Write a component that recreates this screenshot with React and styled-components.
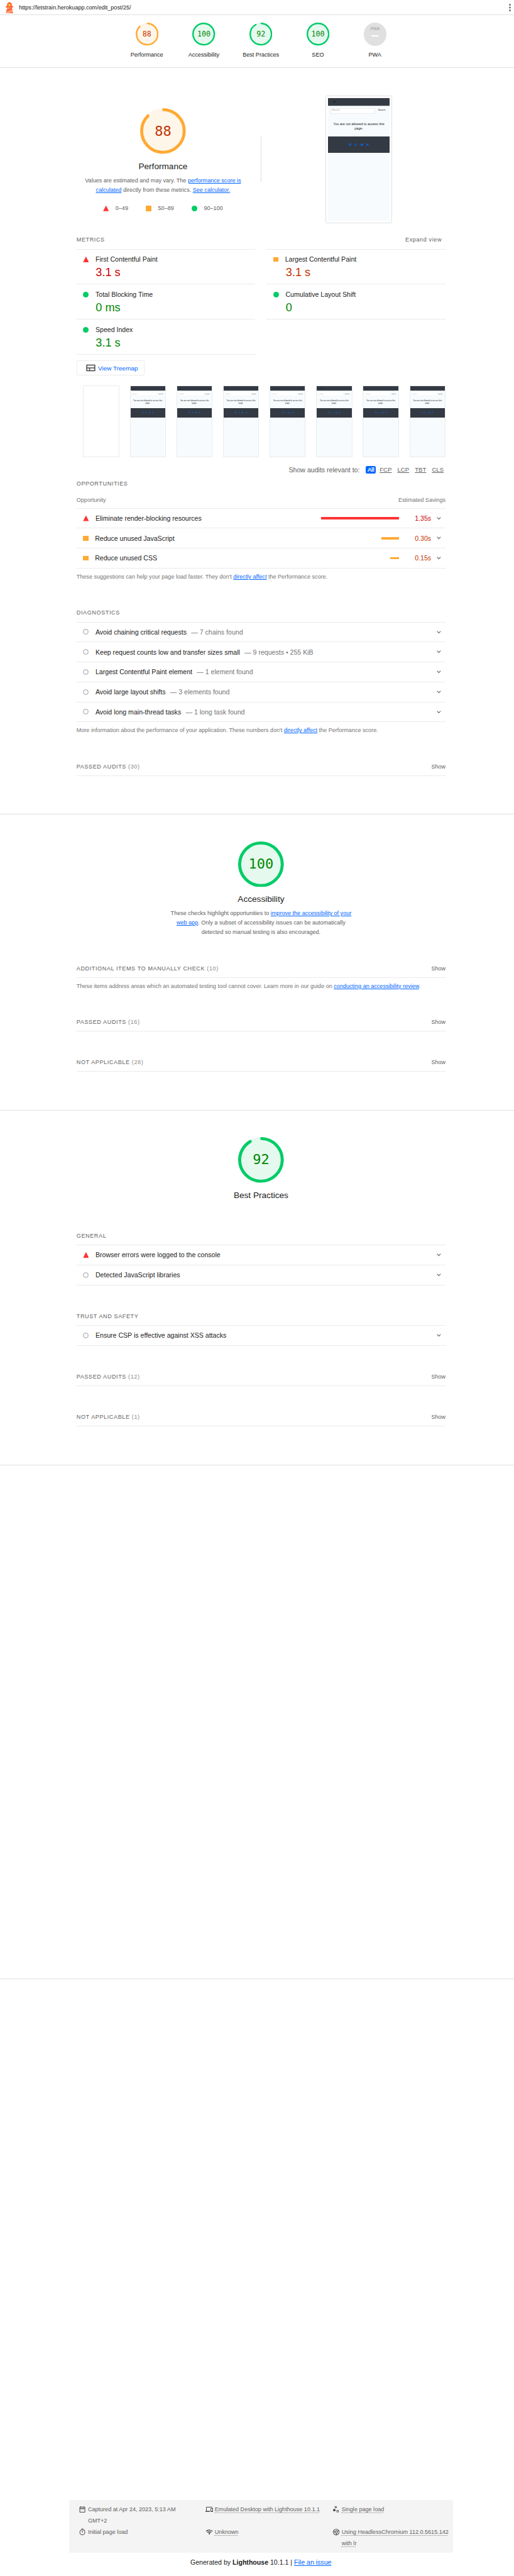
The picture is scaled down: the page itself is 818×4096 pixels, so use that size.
import React from "react";
import styled, { createGlobalStyle, css } from "styled-components";

/* 1rem equals ten layout units of the report */
const GlobalStyle = createGlobalStyle`
  html { font-size: 7.563px; }
  *, *::before, *::after { box-sizing: border-box; }
  body {
    margin: 0;
    background: #fff;
    color: #212121;
    font-family: "Liberation Sans", Arial, sans-serif;
    font-size: 1.4rem;
  }
`;

const tones = {
  pass: { fill: "#00cc66", text: "#008800", soft: "#e5f9ef" },
  average: { fill: "#ffaa33", text: "#c33300", soft: "#fff6ea" },
  fail: { fill: "#ff3333", text: "#cc0000", soft: "#ffeaea" },
};

const Page = styled.div`
  height: 4096px;
  overflow: hidden;
`;

const Topbar = styled.header`
  height: 3.2rem;
  display: flex;
  align-items: center;
  padding: 0 0.6rem 0 0.8rem;
  border-bottom: 1px solid #e0e0e0;
  font-size: 1.2rem;
`;

const Logo = styled.svg`
  width: 2.4rem;
  height: 2.4rem;
  margin-right: 0.8rem;
`;

const MenuDots = styled.svg`
  width: 0.4rem;
  height: 1.6rem;
  margin-left: auto;
  fill: #757575;
`;

const ScoreHeader = styled.nav`
  height: 11.1rem;
  padding: 1.6rem 0 0 24.9rem;
  display: flex;
  border-bottom: 1px solid #e0e0e0;
`;

const ScoreItem = styled.a`
  width: 12rem;
  display: flex;
  flex-direction: column;
  align-items: center;
  gap: 1rem;
  font-size: 1.2rem;
  line-height: 2rem;
  color: #212121;
`;

const GaugeBox = styled.div`
  display: grid;
  width: ${(p) => (p.$large ? "9.6rem" : "4.8rem")};
  height: ${(p) => (p.$large ? "9.6rem" : "4.8rem")};
  place-items: center;
  > * { grid-area: 1 / 1; }
  svg { width: 100%; height: 100%; }
`;

const GaugeValue = styled.span`
  font-family: "DejaVu Sans Mono", monospace;
  font-size: ${(p) => (p.$large ? "2.9rem" : "1.54rem")};
  line-height: 1;
  color: ${(p) => tones[p.$tone].text};
`;

const PwaBadge = styled.div`
  width: 4.8rem;
  height: 4.8rem;
  border-radius: 50%;
  background: #e0e0e0;
  color: #b4b4b4;
  display: flex;
  flex-direction: column;
  align-items: center;
  padding-top: 0.85rem;
  font: italic bold 0.95rem/0.9rem "Liberation Sans", sans-serif;
  letter-spacing: -0.06rem;
`;

const PwaDash = styled.i`
  width: 1.6rem;
  height: 0.35rem;
  margin-top: 0.8rem;
  background: #fff;
`;

const Section = styled.section`
  padding: ${(p) => p.$top || "5.6rem"} 14.4rem 8rem 16.1rem;
  border-bottom: 1px solid #e0e0e0;
`;

const EmptySection = styled.section`
  height: ${(p) => p.$height};
  border-bottom: ${(p) => (p.$last ? "none" : "1px solid #e0e0e0")};
`;

const Hero = styled.div`
  display: grid;
  grid-template-columns: 36.4rem 4.8rem 36.4rem;
  justify-items: center;
  height: 28.6rem;
`;

const Divider = styled.div`
  width: 1px;
  height: 9.6rem;
  margin-top: 8.6rem;
  background: #e0e0e0;
`;

const CategoryIntro = styled.div`
  display: flex;
  flex-direction: column;
  align-items: center;
  text-align: center;
  padding-top: ${(p) => p.$offset || 0};
`;

const CategoryTitle = styled.h2`
  margin: 1.2rem 0 0;
  font-size: 1.8rem;
  font-weight: 400;
  line-height: 2.8rem;
`;

const CategoryText = styled.div`
  margin: 0.6rem 0 0;
  font-size: 1.2rem;
  line-height: 2rem;
  white-space: nowrap;
  color: #616161;
`;

const Link = styled.a`
  color: #0066ff;
  text-decoration: underline;
`;

const Legend = styled.div`
  display: flex;
  gap: 3.7rem;
  margin-top: 1.8rem;
  font-size: 1.2rem;
  line-height: 2rem;
  color: #616161;
`;

const LegendItem = styled.span`
  display: flex;
  align-items: center;
  gap: 1.4rem;
`;

const Mark = styled.i`
  flex: none;
  width: 1.2rem;
  height: 1.2rem;
  ${(p) => p.$kind === "fail" && css`
    background: #ff3333;
    clip-path: polygon(50% 0, 100% 100%, 0 100%);
  `}
  ${(p) => p.$kind === "average" && css`
    background: #ffaa33;
    width: ${p.$small ? "1.1rem" : "1.2rem"};
    height: ${p.$small ? "1rem" : "1.2rem"};
  `}
  ${(p) => p.$kind === "pass" && css`
    background: #00cc66;
    border-radius: 50%;
  `}
  ${(p) => p.$kind === "info" && css`
    box-shadow: inset 0 0 0 0.2rem #bdbdbd;
    border-radius: 50%;
  `}
`;

const ScreenFrame = styled.div`
  width: 14rem;
  height: 26.8rem;
  padding: calc(0.5rem - 1px);
  border: 1px solid #e0e0e0;
  border-radius: 0.3rem;
`;

/* --u is one unit of the 130 x 258 captured page */
const Screen = styled.div`
  --u: ${(p) => p.$unit};
  height: 100%;
  background: #f7fbfd;
  text-align: center;
  overflow: hidden;
`;

const ScreenNav = styled.div`
  height: calc(var(--u) * 16.5);
  padding: calc(var(--u) * 6) calc(var(--u) * 11);
  background: #343a43;
  box-shadow: 0 calc(var(--u) * 0.8) 0 #b6bac4;
  svg { display: block; width: calc(var(--u) * 6); height: calc(var(--u) * 5); }
`;

const ScreenSearch = styled.div`
  display: flex;
  align-items: center;
  justify-content: space-between;
  padding: calc(var(--u) * 4.5) calc(var(--u) * 9) 0 calc(var(--u) * 5);
  font-size: calc(var(--u) * 5);
  line-height: 1;
`;

const ScreenInput = styled.span`
  width: calc(var(--u) * 94);
  height: calc(var(--u) * 12.5);
  padding: calc(var(--u) * 3.6) calc(var(--u) * 4);
  text-align: left;
  color: #999;
  background: #fff;
  box-shadow: inset 0 0 0 calc(var(--u) * 0.8) ${(p) => (p.$faint ? "#f0f2f4" : "#d5d9de")};
  border-radius: calc(var(--u) * 1.5);
`;

const ScreenMessage = styled.div`
  height: calc(var(--u) * 47.5);
  padding-top: calc(var(--u) * 17);
  font-size: calc(var(--u) * 7.15);
  line-height: calc(var(--u) * 9.1);
`;

const ScreenFooter = styled.div`
  height: calc(var(--u) * 35);
  display: flex;
  justify-content: center;
  align-items: center;
  gap: calc(var(--u) * 7.4);
  background: #343a43;
  svg { width: calc(var(--u) * 5.2); height: calc(var(--u) * 5.2); fill: #0a66e8; }
`;

const MetricsHeader = styled.div`
  display: flex;
  justify-content: space-between;
  height: 3.6rem;
  padding-right: 0.8rem;
  line-height: 3.5rem;
  font-size: 1.2rem;
  letter-spacing: 0.08rem;
  color: #616161;
`;

const MetricsGrid = styled.div`
  display: grid;
  grid-template-columns: 37.6rem 37.6rem;
  column-gap: 2.4rem;
  align-items: start;
  height: 22.2rem;
`;

const MetricColumn = styled.div`
  border-bottom: 1px solid #ebebeb;
`;

const Metric = styled.div`
  height: 7.4rem;
  &:last-child { height: 7.3rem; }
  padding: 1.1rem 0 0 1.4rem;
  border-top: 1px solid #ebebeb;
`;

const MetricName = styled.div`
  display: flex;
  align-items: center;
  line-height: 2rem;
  i { margin-right: 1.4rem; }
  i + span { flex: none; }
`;

const MetricValue = styled.div`
  margin-left: 2.65rem;
  font-size: 2.4rem;
  line-height: 3.6rem;
  color: ${(p) => tones[p.$tone].text};
`;

const TreemapButton = styled.button`
  display: flex;
  align-items: center;
  gap: 0.4rem;
  width: 14.3rem;
  height: 3.2rem;
  margin: 1.3rem 0 2.1rem;
  padding: 0 0 0 1.6rem;
  border: 1px solid #ebebeb;
  border-radius: 0.3rem;
  background: #fff;
  color: #0066ff;
  font: 1.32rem "Liberation Sans", sans-serif;
  white-space: nowrap;
  svg { width: 2.4rem; height: 2.4rem; fill: #4a4a4a; }
`;

const Filmstrip = styled.div`
  display: flex;
  justify-content: space-between;
  padding-left: 1.4rem;
`;

const Frame = styled.div`
  width: 7.6rem;
  height: 15rem;
  border: 1px solid #ebebeb;
`;

const Filter = styled.div`
  display: flex;
  justify-content: flex-end;
  align-items: center;
  height: 2.4rem;
  margin: 1.5rem 0 0.8rem;
  padding-right: 0.4rem;
  color: #616161;
`;

const FilterOption = styled.span`
  margin-left: ${(p) => (p.$active ? "1.3rem" : "1.2rem")};
  font-size: 1.27rem;
  line-height: 1.6rem;
  text-decoration: underline;
  ${(p) => p.$active && css`
    padding: 0 0.35rem;
    margin-right: -0.4rem;
    border-radius: 0.3rem;
    background: #0066ff;
    color: #fff;
    text-decoration: none;
    text-shadow: 0 0 0.5px #fff;
  `}
`;

const GroupTitle = styled.h3`
  margin: ${(p) => p.$top || "5.6rem"} 0 0;
  height: 2.8rem;
  font-size: 1.2rem;
  font-weight: 400;
  line-height: 2rem;
  letter-spacing: 0.08rem;
  text-transform: uppercase;
  color: #616161;
`;

const TableHead = styled.div`
  display: flex;
  justify-content: space-between;
  height: 3.2rem;
  padding-top: 0.6rem;
  font-size: 1.2rem;
  line-height: 2rem;
  color: #757575;
`;

const AuditList = styled.div`
  border-bottom: 1px solid #ebebeb;
`;

const Audit = styled.div`
  display: flex;
  align-items: center;
  height: 4.2rem;
  padding: 0 0.95rem 0 1.4rem;
  border-top: 1px solid #ebebeb;
  > i { margin-right: 1.4rem; }
`;

const Detail = styled.span`
  margin-left: 0.95rem;
  color: #757575;
`;

const Spacer = styled.span`
  flex: 1;
`;

const Bar = styled.span`
  height: 0.5rem;
  background: ${(p) => tones[p.$tone].fill};
`;

const Savings = styled.span`
  width: 6.8rem;
  margin-right: 1.2rem;
  text-align: right;
  color: ${(p) => tones[p.$tone].text};
`;

const ChevronIcon = styled.svg`
  width: 0.9rem;
  height: 0.6rem;
  fill: none;
  stroke: #757575;
  stroke-width: 1.7;
`;

const Note = styled.p`
  margin: 0.8rem 0 0;
  font-size: 1.2rem;
  line-height: 2rem;
  white-space: nowrap;
  color: #757575;
`;

const ClumpHead = styled.div`
  display: flex;
  height: 2.9rem;
  margin-top: 5.6rem;
  border-bottom: 1px solid #ebebeb;
  font-size: 1.2rem;
  line-height: 2rem;
  color: #616161;
`;

const ClumpTitle = styled.span`
  letter-spacing: 0.08rem;
  text-transform: uppercase;
  em { font-style: normal; color: #8a8a8a; }
`;

const ShowLabel = styled.span`
  margin-left: auto;
`;

const MetaBox = styled.footer`
  display: grid;
  grid-template-columns: 26.7rem 26.7rem 1fr;
  grid-template-rows: 4.8rem 4.8rem;
  width: 80.8rem;
  height: 11.2rem;
  margin-left: 14.5rem;
  padding: 0.8rem 0.6rem 0 2rem;
  border-radius: 0.3rem;
  background: #f4f4f4;
  font-size: 1.2rem;
  line-height: 2.4rem;
  color: #616161;
`;

const MetaItem = styled.div`
  display: flex;
  gap: 0.4rem;
  svg { flex: none; width: 1.6rem; height: 1.6rem; margin-top: 0.45rem; fill: #4a4a4a; }
  span {
    ${(p) => !p.$plain && css`
      text-decoration: underline dotted #888;
      text-underline-offset: 0.25rem;
    `}
  }
`;

const Generated = styled.div`
  margin: 1rem 0 0 14.5rem;
  width: 80.8rem;
  text-align: center;
  line-height: 2rem;
`;

const CIRC = 2 * Math.PI * 56;

function Gauge({ score, tone, large }) {
  const dash = score === 100 ? CIRC : (score / 100) * CIRC - 4;
  return (
    <GaugeBox $large={large}>
      <svg viewBox="0 0 120 120">
        <circle cx="60" cy="60" r="60" fill={tones[tone].soft} />
        <circle cx="60" cy="60" r="56" fill="none" stroke={tones[tone].fill} strokeWidth="8"
          strokeLinecap="round" strokeDasharray={`${dash} ${CIRC}`} transform="rotate(-87.95 60 60)" />
      </svg>
      <GaugeValue $large={large} $tone={tone}>{score}</GaugeValue>
    </GaugeBox>
  );
}

function Chevron() {
  return <ChevronIcon viewBox="0 0 9 6"><path d="M0.7 0.8 4.5 4.6 8.3 0.8" /></ChevronIcon>;
}

function PageShot({ unit, faint }) {
  return (
    <Screen $unit={unit}>
      <ScreenNav>
        <svg viewBox="0 0 6 5"><path d="M0.5 0.7h5M0.5 2.5h5M0.5 4.3h5" stroke="#20252b" strokeWidth="1" /></svg>
      </ScreenNav>
      <ScreenSearch><ScreenInput $faint={faint}>Search</ScreenInput><span>Search</span></ScreenSearch>
      <ScreenMessage>
        <div>You are not allowed to access this</div>
        <div>page.</div>
      </ScreenMessage>
      <ScreenFooter>
        <svg viewBox="0 0 16 16"><path d="M16 8a8 8 0 1 0-9.2 7.9v-5.6h-2V8h2V6.200c0-2 1.200-3.100 3-3.100l1.800.2v2h-1c-1 0-1.300.6-1.300 1.200V8h2.200l-.4 2.300H9.300v5.600A8 8 0 0 0 16 8z" /></svg>
        <svg viewBox="0 0 16 16"><path fillRule="evenodd" d="M4 0h8a4 4 0 0 1 4 4v8a4 4 0 0 1-4 4H4a4 4 0 0 1-4-4V4a4 4 0 0 1 4-4zm0 1.500A2.500 2.500 0 0 0 1.500 4v8A2.500 2.500 0 0 0 4 14.500h8a2.500 2.500 0 0 0 2.500-2.500V4A2.500 2.500 0 0 0 12 1.500zM8 4a4 4 0 1 1 0 8 4 4 0 0 1 0-8zm0 1.500a2.500 2.500 0 1 0 0 5 2.500 2.500 0 0 0 0-5z" /></svg>
        <svg viewBox="0 0 16 16"><path fillRule="evenodd" d="M3 2h10a3 3 0 0 1 3 3v6a3 3 0 0 1-3 3H3a3 3 0 0 1-3-3V5a3 3 0 0 1 3-3zm3.500 3.500v5L11 8z" /></svg>
        <svg viewBox="0 0 24 24"><path d="M24 4.600a10 10 0 0 1-2.800.8 5 5 0 0 0 2.100-2.700 10 10 0 0 1-3.100 1.200 4.900 4.900 0 0 0-8.400 4.500A14 14 0 0 1 1.700 3.200a4.900 4.900 0 0 0 1.500 6.500 5 5 0 0 1-2.200-.6 4.900 4.900 0 0 0 3.900 4.900 5 5 0 0 1-2.200.1 4.900 4.900 0 0 0 4.600 3.400A10 10 0 0 1 0 19.500 14 14 0 0 0 21.500 7 10 10 0 0 0 24 4.600z" /></svg>
      </ScreenFooter>
    </Screen>
  );
}

function MetricCard({ name, value, tone }) {
  return (
    <Metric>
      <MetricName><Mark $kind={tone} $small /><span>{name}</span></MetricName>
      <MetricValue $tone={tone}>{value}</MetricValue>
    </Metric>
  );
}

function AuditRow({ kind = "info", title, detail, saving, bar }) {
  return (
    <Audit>
      <Mark $kind={kind} $small />
      <span>{title}</span>
      {detail && <Detail>— {detail}</Detail>}
      <Spacer />
      {saving && <Bar $tone={kind} style={{ width: `${bar}rem` }} />}
      {saving && <Savings $tone={kind}>{saving}</Savings>}
      <Chevron />
    </Audit>
  );
}

function Clump({ title, count }) {
  return (
    <ClumpHead>
      <ClumpTitle>{title} <em>({count})</em></ClumpTitle>
      <ShowLabel>Show</ShowLabel>
    </ClumpHead>
  );
}

const scores = [
  ["Performance", 88, "average"],
  ["Accessibility", 100, "pass"],
  ["Best Practices", 92, "pass"],
  ["SEO", 100, "pass"],
];

export default function App() {
  return (
    <Page>
      <GlobalStyle />
      <Topbar>
        <Logo viewBox="0 0 48 48">
          <path d="m14 7 10-7 10 7v10h5v7h-5l5 24H9l5-24H9v-7h5V7Z" fill="#F63" />
          <path d="M31.561 24H14l-1.689 8.105L31.561 24ZM18.983 48H9l1.022-4.907L35.723 32.27l1.663 7.98L18.983 48Z" fill="#FFA385" />
          <path d="M20.500 10h7v7h-7z" fill="#FF3" />
        </Logo>
        <span>https://letstrain.herokuapp.com/edit_post/25/</span>
        <MenuDots viewBox="0 0 4 16"><circle cx="2" cy="2" r="2" /><circle cx="2" cy="8" r="2" /><circle cx="2" cy="14" r="2" /></MenuDots>
      </Topbar>

      <ScoreHeader>
        {scores.map(([name, score, tone]) => (
          <ScoreItem key={name}><Gauge score={score} tone={tone} />{name}</ScoreItem>
        ))}
        <ScoreItem><PwaBadge>PWA<PwaDash /></PwaBadge>PWA</ScoreItem>
      </ScoreHeader>

      <Section $top="5.8rem">
        <Hero>
          <CategoryIntro $offset="2.7rem">
            <Gauge score={88} tone="average" large />
            <CategoryTitle>Performance</CategoryTitle>
            <CategoryText>
              <div>Values are estimated and may vary. The <Link>performance score is</Link></div>
              <div><Link>calculated</Link> directly from these metrics. <Link>See calculator.</Link></div>
            </CategoryText>
            <Legend>
              <LegendItem><Mark $kind="fail" />0–49</LegendItem>
              <LegendItem><Mark $kind="average" />50–89</LegendItem>
              <LegendItem><Mark $kind="pass" />90–100</LegendItem>
            </Legend>
          </CategoryIntro>
          <Divider />
          <ScreenFrame><PageShot unit="0.1rem" /></ScreenFrame>
        </Hero>

        <MetricsHeader><span>METRICS</span><span>Expand view</span></MetricsHeader>
        <MetricsGrid>
          <MetricColumn>
            <MetricCard name="First Contentful Paint" value="3.1 s" tone="fail" />
            <MetricCard name="Total Blocking Time" value="0 ms" tone="pass" />
            <MetricCard name="Speed Index" value="3.1 s" tone="pass" />
          </MetricColumn>
          <MetricColumn>
            <MetricCard name="Largest Contentful Paint" value="3.1 s" tone="average" />
            <MetricCard name="Cumulative Layout Shift" value="0" tone="pass" />
          </MetricColumn>
        </MetricsGrid>

        <TreemapButton>
          <svg viewBox="0 0 24 24"><path fillRule="evenodd" d="M3 5v14h19V5H3zm2 2h15v4H5V7zm0 10v-4h4v4H5zm6 0v-4h9v4h-9z" /></svg>
          View Treemap
        </TreemapButton>

        <Filmstrip>
          <Frame />
          {[1, 2, 3, 4, 5, 6, 7].map((n) => (
            <Frame key={n}><PageShot unit="0.0565rem" faint /></Frame>
          ))}
        </Filmstrip>

        <Filter>
          Show audits relevant to:
          <FilterOption $active>All</FilterOption>
          <FilterOption>FCP</FilterOption>
          <FilterOption>LCP</FilterOption>
          <FilterOption>TBT</FilterOption>
          <FilterOption>CLS</FilterOption>
        </Filter>

        <GroupTitle $top="0">Opportunities</GroupTitle>
        <TableHead><span>Opportunity</span><span>Estimated Savings</span></TableHead>
        <AuditList>
          <AuditRow kind="fail" title="Eliminate render-blocking resources" saving="1.35s" bar={16.3} />
          <AuditRow kind="average" title="Reduce unused JavaScript" saving="0.30s" bar={3.7} />
          <AuditRow kind="average" title="Reduce unused CSS" saving="0.15s" bar={1.85} />
        </AuditList>
        <Note>These suggestions can help your page load faster. They don't <Link>directly affect</Link> the Performance score.</Note>

        <GroupTitle>Diagnostics</GroupTitle>
        <AuditList>
          <AuditRow title="Avoid chaining critical requests" detail="7 chains found" />
          <AuditRow title="Keep request counts low and transfer sizes small" detail="9 requests • 255 KiB" />
          <AuditRow title="Largest Contentful Paint element" detail="1 element found" />
          <AuditRow title="Avoid large layout shifts" detail="3 elements found" />
          <AuditRow title="Avoid long main-thread tasks" detail="1 long task found" />
        </AuditList>
        <Note>More information about the performance of your application. These numbers don't <Link>directly affect</Link> the Performance score.</Note>
        <Clump title="Passed audits" count={30} />
      </Section>

      <Section>
        <CategoryIntro>
          <Gauge score={100} tone="pass" large />
          <CategoryTitle>Accessibility</CategoryTitle>
          <CategoryText>
            <div>These checks highlight opportunities to <Link>improve the accessibility of your</Link></div>
            <div><Link>web app</Link>. Only a subset of accessibility issues can be automatically</div>
            <div>detected so manual testing is also encouraged.</div>
          </CategoryText>
        </CategoryIntro>
        <Clump title="Additional items to manually check" count={10} />
        <Note>These items address areas which an automated testing tool cannot cover. Learn more in our guide on <Link>conducting an accessibility review</Link>.</Note>
        <Clump title="Passed audits" count={16} />
        <Clump title="Not applicable" count={28} />
      </Section>

      <Section>
        <CategoryIntro>
          <Gauge score={92} tone="pass" large />
          <CategoryTitle>Best Practices</CategoryTitle>
        </CategoryIntro>
        <GroupTitle $top="6.2rem">General</GroupTitle>
        <AuditList>
          <AuditRow kind="fail" title="Browser errors were logged to the console" />
          <AuditRow title="Detected JavaScript libraries" />
        </AuditList>
        <GroupTitle>Trust and Safety</GroupTitle>
        <AuditList>
          <AuditRow title="Ensure CSP is effective against XSS attacks" />
        </AuditList>
        <Clump title="Passed audits" count={12} />
        <Clump title="Not applicable" count={1} />
      </Section>

      <EmptySection $height="108.1rem" />
      <EmptySection $height="109.4rem" $last />

      <MetaBox>
        <MetaItem $plain>
          <svg viewBox="0 0 24 24"><path d="M7 11h2v2H7v-2zm14-5v14c0 1.100-.9 2-2 2H5c-1.110 0-2-.9-2-2l.01-14c0-1.100.88-2 1.990-2h1V2h2v2h8V2h2v2h1c1.100 0 2 .9 2 2zM5 8h14V6H5v2zm14 12V10H5v10h14zm-4-7h2v-2h-2v2zm-4 0h2v-2h-2v2z" /></svg>
          <span>Captured at Apr 24, 2023, 5:13 AM<br />GMT+2</span>
        </MetaItem>
        <MetaItem>
          <svg viewBox="0 0 24 24"><path d="M4 6h18V4H4c-1.100 0-2 .9-2 2v11H0v3h14v-3H4V6zm19 2h-6c-.55 0-1 .45-1 1v10c0 .55.45 1 1 1h6c.55 0 1-.45 1-1V9c0-.55-.45-1-1-1zm-1 9h-4v-7h4v7z" /></svg>
          <span>Emulated Desktop with Lighthouse 10.1.1</span>
        </MetaItem>
        <MetaItem>
          <svg viewBox="0 0 24 24">
            <circle cx="6" cy="14.500" r="4" />
            <circle cx="10.500" cy="5" r="2.600" fill="none" stroke="#4a4a4a" strokeWidth="2" />
            <circle cx="16.500" cy="18" r="3" fill="none" stroke="#4a4a4a" strokeWidth="2" />
          </svg>
          <span>Single page load</span>
        </MetaItem>
        <MetaItem $plain>
          <svg viewBox="0 0 24 24">
            <path d="M15 1H9v2h6V1zm-4 13h2V8h-2v6zM17.600 6l1.400-1.400 1.500 1.400-1.500 1.500z" />
            <circle cx="12" cy="13" r="8" fill="none" stroke="#4a4a4a" strokeWidth="2" />
          </svg>
          <span>Initial page load</span>
        </MetaItem>
        <MetaItem>
          <svg viewBox="0 0 24 24"><path d="M15.900 5c-.17 0-.32.09-.41.23l-.07.15-5.180 11.650c-.16.29-.26.61-.26.96 0 1.110.9 2.010 2.010 2.010.96 0 1.770-.68 1.960-1.590l.01-.03L16.400 5.500c0-.28-.22-.5-.5-.5zM1 9l2 2c2.880-2.880 6.790-4.080 10.530-3.620l1.190-2.680C9.890 3.840 4.740 5.270 1 9zm20 2 2-2c-1.640-1.640-3.550-2.820-5.590-3.570l-.53 2.820c1.500.62 2.900 1.530 4.120 2.750zm-4 4 2-2c-.8-.8-1.700-1.420-2.660-1.890l-.55 2.920c.42.27.83.59 1.210.97zM5 13l2 2c1.130-1.130 2.560-1.790 4.030-2l1.280-2.880c-2.630-.08-5.300.87-7.310 2.880z" /></svg>
          <span>Unknown</span>
        </MetaItem>
        <MetaItem>
          <svg viewBox="0 0 24 24">
            <g fill="none" stroke="#4a4a4a" strokeWidth="2">
              <circle cx="12" cy="12" r="9.200" />
              <circle cx="12" cy="12" r="3.800" />
              <path d="M12 8.200h8.300M8.700 13.900 4.600 6.800M15.300 13.900l-4.100 7.200" />
            </g>
          </svg>
          <span>Using HeadlessChromium 112.0.5615.142<br />with lr</span>
        </MetaItem>
      </MetaBox>
      <Generated>Generated by <b>Lighthouse</b> 10.1.1 | <Link>File an issue</Link></Generated>
    </Page>
  );
}
